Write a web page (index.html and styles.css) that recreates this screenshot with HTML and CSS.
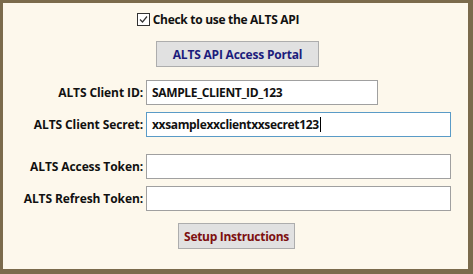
FILE: index.html
```html
<!DOCTYPE html>
<html lang="en">
<head>
<meta charset="UTF-8">
<title>ALTS API Settings</title>
<link rel="stylesheet" href="styles.css">
</head>
<body>
<div class="frame">
    <label class="check-row">
        <span class="check-box">
            <svg width="11" height="11" viewBox="0 0 11 11"><path d="M2 5.5 L4.5 8 L9 2.5" fill="none" stroke="#333" stroke-width="1.2"/></svg>
        </span>
        Check to use the ALTS API
    </label>

    <div class="button-row">
        <button class="button portal">ALTS API Access Portal</button>
    </div>

    <div class="fields">
        <div class="field">
            <span class="field-label">ALTS Client ID:</span>
            <div class="field-input short">SAMPLE_CLIENT_ID_123</div>
        </div>
        <div class="field">
            <span class="field-label">ALTS Client Secret:</span>
            <div class="field-input focused">xxsamplexxclientxxsecret123<span class="caret"></span></div>
        </div>
        <div class="field spaced">
            <span class="field-label">ALTS Access Token:</span>
            <div class="field-input"></div>
        </div>
        <div class="field">
            <span class="field-label">ALTS Refresh Token:</span>
            <div class="field-input"></div>
        </div>
    </div>

    <div class="button-row">
        <button class="button setup">Setup Instructions</button>
    </div>
</div>
</body>
</html>
```

FILE: styles.css
```css
body {
    margin: 0;
    padding: 0;
    font-family: "Open Sans", "Noto Sans", sans-serif;
    font-weight: bold;
    font-size: 12px;
    letter-spacing: -0.35px;
    color: #111;
}

.frame {
    box-sizing: border-box;
    width: 473px;
    height: 274px;
    background-color: #fdf8ec;
    border-style: solid;
    border-color: #7b6b4c;
    border-width: 3px 5px 5px 3px;
    display: flex;
    flex-direction: column;
}

.check-row {
    display: flex;
    align-items: center;
    justify-content: center;
    gap: 3px;
    margin-top: 9px;
    height: 14px;
    padding-right: 35px;
    letter-spacing: -0.3px;
}

.check-box {
    box-sizing: border-box;
    width: 13px;
    height: 13px;
    border: 1px solid #333;
    background-color: #fff;
    display: flex;
    align-items: center;
    justify-content: center;
}

.button-row {
    display: flex;
    justify-content: center;
}

.button {
    font-family: inherit;
    font-weight: bold;
    font-size: 12px;
    letter-spacing: -0.2px;
    height: 26px;
    padding: 0;
    white-space: nowrap;
    background-color: #e1e1e1;
    border: 1px solid #adadad;
    border-radius: 0;
}

.portal {
    margin-top: 15px;
    width: 163px;
    margin-left: 4px;
    color: #1c1c7c;
}

.setup {
    margin-top: 12px;
    width: 117px;
    margin-left: 2px;
    color: #7d1010;
    letter-spacing: -0.3px;
}

.fields {
    margin-top: 13px;
    display: flex;
    flex-direction: column;
    gap: 7px;
}

.field {
    display: flex;
    align-items: center;
}

.field.spaced {
    margin-top: 10px;
}

.field-label {
    width: 140px;
    text-align: right;
    padding-right: 3px;
    letter-spacing: -0.1px;
}

.field-input {
    box-sizing: border-box;
    width: 305px;
    height: 25px;
    background-color: #fff;
    border: 1px solid #a0a0a0;
    padding: 0 5px;
    display: flex;
    align-items: center;
}

.field-input.short {
    width: 232px;
}

.field-input.focused {
    border-color: #5a9bc7;
}

.caret {
    display: inline-block;
    width: 1px;
    height: 15px;
    background-color: #000;
    margin-left: 1px;
}
```
